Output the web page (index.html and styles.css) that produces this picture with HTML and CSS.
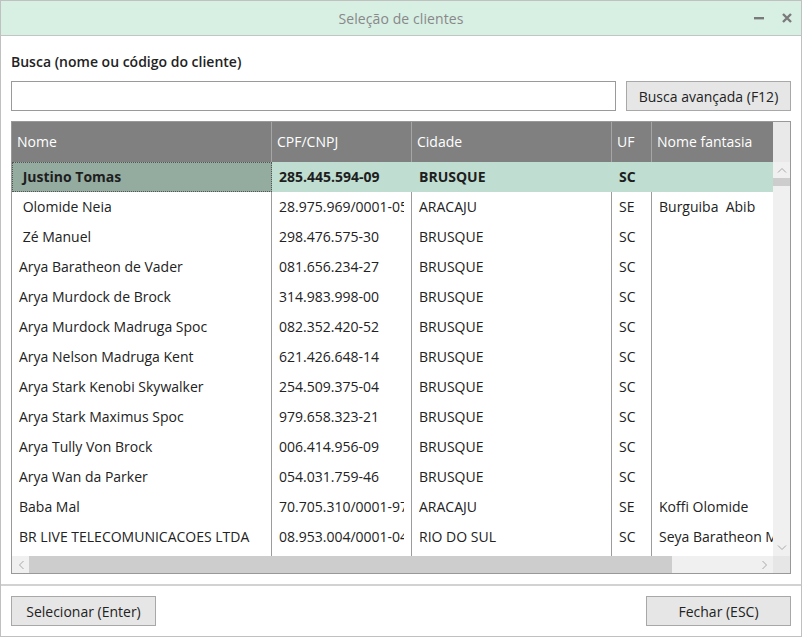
FILE: index.html
```html
<!DOCTYPE html>
<html lang="pt">
<head>
<meta charset="utf-8">
<title>Seleção de clientes</title>
<link rel="stylesheet" href="styles.css">
</head>
<body>
<div class="window">
  <div class="titlebar">
    <div class="title">Seleção de clientes</div>
    <div class="title-actions">
      <span class="tb-btn tb-min"><svg width="12" height="12" viewBox="0 0 12 12"><rect x="1" y="5" width="10" height="2.4" fill="#7a7a7a"/></svg></span>
      <span class="tb-btn tb-close"><svg width="12" height="12" viewBox="0 0 12 12"><path d="M2 2 L10 10 M10 2 L2 10" stroke="#7a7a7a" stroke-width="2.4" stroke-linecap="butt"/></svg></span>
    </div>
  </div>
  <div class="content">
    <label class="search-label" for="busca">Busca (nome ou código do cliente)</label>
    <div class="search-row">
      <input id="busca" class="search-input" type="text">
      <button class="btn btn-adv">Busca avançada (F12)</button>
    </div>
    <div class="grid">
      <div class="grid-main">
        <div class="grid-cols">
          <div class="row head">
            <div class="c c1"><span>Nome</span></div><div class="c c2"><span>CPF/CNPJ</span></div><div class="c c3"><span>Cidade</span></div><div class="c c4"><span>UF</span></div><div class="c c5"><span>Nome fantasia</span></div>
          </div>
          <div class="row sel">
            <div class="c c1 focus"><span>&nbsp;Justino Tomas</span></div><div class="c c2"><span>285.445.594-09</span></div><div class="c c3"><span>BRUSQUE</span></div><div class="c c4"><span>SC</span></div><div class="c c5"><span></span></div>
          </div>
          <div class="row"><div class="c c1"><span>&nbsp;Olomide Neia</span></div><div class="c c2"><span>28.975.969/0001-05</span></div><div class="c c3"><span>ARACAJU</span></div><div class="c c4"><span>SE</span></div><div class="c c5"><span>Burguiba&nbsp; Abib</span></div></div>
          <div class="row"><div class="c c1"><span>&nbsp;Zé Manuel</span></div><div class="c c2"><span>298.476.575-30</span></div><div class="c c3"><span>BRUSQUE</span></div><div class="c c4"><span>SC</span></div><div class="c c5"><span></span></div></div>
          <div class="row"><div class="c c1"><span>Arya Baratheon de Vader</span></div><div class="c c2"><span>081.656.234-27</span></div><div class="c c3"><span>BRUSQUE</span></div><div class="c c4"><span>SC</span></div><div class="c c5"><span></span></div></div>
          <div class="row"><div class="c c1"><span>Arya Murdock de Brock</span></div><div class="c c2"><span>314.983.998-00</span></div><div class="c c3"><span>BRUSQUE</span></div><div class="c c4"><span>SC</span></div><div class="c c5"><span></span></div></div>
          <div class="row"><div class="c c1"><span>Arya Murdock Madruga Spoc</span></div><div class="c c2"><span>082.352.420-52</span></div><div class="c c3"><span>BRUSQUE</span></div><div class="c c4"><span>SC</span></div><div class="c c5"><span></span></div></div>
          <div class="row"><div class="c c1"><span>Arya Nelson Madruga Kent</span></div><div class="c c2"><span>621.426.648-14</span></div><div class="c c3"><span>BRUSQUE</span></div><div class="c c4"><span>SC</span></div><div class="c c5"><span></span></div></div>
          <div class="row"><div class="c c1"><span>Arya Stark Kenobi Skywalker</span></div><div class="c c2"><span>254.509.375-04</span></div><div class="c c3"><span>BRUSQUE</span></div><div class="c c4"><span>SC</span></div><div class="c c5"><span></span></div></div>
          <div class="row"><div class="c c1"><span>Arya Stark Maximus Spoc</span></div><div class="c c2"><span>979.658.323-21</span></div><div class="c c3"><span>BRUSQUE</span></div><div class="c c4"><span>SC</span></div><div class="c c5"><span></span></div></div>
          <div class="row"><div class="c c1"><span>Arya Tully Von Brock</span></div><div class="c c2"><span>006.414.956-09</span></div><div class="c c3"><span>BRUSQUE</span></div><div class="c c4"><span>SC</span></div><div class="c c5"><span></span></div></div>
          <div class="row"><div class="c c1"><span>Arya Wan da Parker</span></div><div class="c c2"><span>054.031.759-46</span></div><div class="c c3"><span>BRUSQUE</span></div><div class="c c4"><span>SC</span></div><div class="c c5"><span></span></div></div>
          <div class="row"><div class="c c1"><span>Baba Mal</span></div><div class="c c2"><span>70.705.310/0001-97</span></div><div class="c c3"><span>ARACAJU</span></div><div class="c c4"><span>SE</span></div><div class="c c5"><span>Koffi Olomide</span></div></div>
          <div class="row"><div class="c c1"><span>BR LIVE TELECOMUNICACOES LTDA</span></div><div class="c c2"><span>08.953.004/0001-04</span></div><div class="c c3"><span>RIO DO SUL</span></div><div class="c c4"><span>SC</span></div><div class="c c5"><span>Seya Baratheon Mota</span></div></div>
          <div class="row"><div class="c c1"><span></span></div><div class="c c2"><span></span></div><div class="c c3"><span></span></div><div class="c c4"><span></span></div><div class="c c5"><span></span></div></div>
        </div>
        <div class="vscroll">
          <div class="vs-head"></div>
          <div class="vs-track">
            <div class="arrow up"><svg width="10" height="6" viewBox="0 0 10 6"><path d="M1 5.5 L5 1.5 L9 5.5" fill="none" stroke="#a8a8a8" stroke-width="1"/></svg></div>
            <div class="vs-thumb"></div>
            <div class="vs-fill"></div>
            <div class="arrow down"><svg width="10" height="6" viewBox="0 0 10 6"><path d="M1 0.5 L5 4.5 L9 0.5" fill="none" stroke="#a8a8a8" stroke-width="1"/></svg></div>
          </div>
        </div>
      </div>
      <div class="hscroll-row">
        <div class="hscroll">
          <div class="arrow left"><svg width="6" height="10" viewBox="0 0 6 10"><path d="M5.5 1 L1.5 5 L5.5 9" fill="none" stroke="#a8a8a8" stroke-width="1"/></svg></div>
          <div class="hs-thumb"></div>
          <div class="hs-fill"></div>
          <div class="arrow right"><svg width="6" height="10" viewBox="0 0 6 10"><path d="M0.5 1 L4.5 5 L0.5 9" fill="none" stroke="#a8a8a8" stroke-width="1"/></svg></div>
        </div>
        <div class="corner"></div>
      </div>
    </div>
  </div>
  <div class="footer">
    <button class="btn btn-foot">Selecionar (Enter)</button>
    <button class="btn btn-foot">Fechar (ESC)</button>
  </div>
</div>
</body>
</html>
```

FILE: styles.css
```css
* { box-sizing: border-box; }
html, body { margin: 0; padding: 0; background: #ffffff; }
body {
  font-family: "Open Sans", "Noto Sans", sans-serif;
  font-size: 14px;
  color: #222222;
}
.window {
  width: 802px;
  height: 637px;
  border: 1px solid #c0c0c0;
  display: flex;
  flex-direction: column;
  background: #ffffff;
}
.titlebar {
  height: 35px;
  flex: none;
  background: #d8efe4;
  border-bottom: 1px solid #c4c4c4;
  display: flex;
  align-items: center;
  justify-content: center;
  position: relative;
}
.title {
  color: #888888;
  font-size: 14px;
  letter-spacing: 0.1px;
}
.title-actions {
  position: absolute;
  right: 8px;
  top: 0;
  height: 34px;
  display: flex;
  align-items: center;
  gap: 16px;
}
.tb-btn { display: flex; width: 12px; height: 12px; }
.content {
  flex: none;
  padding: 16px 10px 0 10px;
  display: flex;
  flex-direction: column;
}
.search-label {
  display: block;
  line-height: 20px;
  font-weight: 600;
  color: #222;
  height: 20px;
}
.search-row {
  display: flex;
  gap: 10px;
  margin-top: 9px;
}
.search-input {
  width: 605px;
  height: 30px;
  border: 1px solid #9a9a9a;
  background: #fff;
  margin: 0;
  padding: 0 6px;
  font: inherit;
}
.btn {
  font-family: "Open Sans", "Noto Sans", sans-serif;
  font-size: 14px;
  color: #222;
  background: #e6e6e6;
  border: 1px solid #a8a8a8;
  height: 30px;
  margin: 0;
  padding: 0;
}
.btn-adv { width: 165px; }
.grid {
  margin-top: 10px;
  width: 780px;
  height: 453px;
  border: 1px solid #999999;
  display: flex;
  flex-direction: column;
}
.grid-main {
  flex: 1;
  display: flex;
  min-height: 0;
}
.grid-cols {
  width: 761px;
  overflow: hidden;
}
.row {
  display: flex;
  height: 30px;
  white-space: nowrap;
}
.row.head {
  height: 40px;
  background: #808080;
  color: #ffffff;
}
.c {
  flex: none;
  padding: 0 7px;
  line-height: 30px;
  border-right: 1px solid #9c9c9c;
}
.c span {
  display: block;
  overflow: hidden;
  height: 100%;
}
.head .c {
  padding-left: 5px;
  line-height: 40px;
  border-right: 1px solid #a6a6a6;
}
.c1 { width: 260px; }
.c2 { width: 140px; }
.c3 { width: 200px; }
.c4 { width: 40px; }
.c5 { width: 200px; border-right: none; }
.sel {
  background: #bfddd0;
  font-weight: 700;
  color: #1e1e1e;
}
.sel .c { border-right-color: #bfddd0; }
.sel .c1.focus {
  background: #94ab9f;
  border: 1px dotted #555;
  padding-left: 6px;
  line-height: 28px;
}
.vscroll {
  width: 17px;
  flex: none;
  display: flex;
  flex-direction: column;
  background: #ebebeb;
}
.vs-head { height: 40px; background: #e9e9e9; }
.vs-track {
  flex: 1;
  display: flex;
  flex-direction: column;
  background: #f0f0f0;
}
.arrow {
  display: flex;
  align-items: center;
  justify-content: center;
  flex: none;
}
.arrow.up, .arrow.down { height: 16px; }
.vs-thumb { height: 8px; background: #cdcdcd; }
.vs-fill { flex: 1; }
.hscroll-row {
  height: 17px;
  flex: none;
  display: flex;
}
.hscroll {
  flex: 1;
  display: flex;
  background: #f0f0f0;
}
.arrow.left, .arrow.right { width: 17px; }
.hs-thumb { width: 643px; background: #cdcdcd; }
.hs-fill { flex: 1; }
.corner { width: 17px; background: #e6e6e6; }
.footer {
  margin-top: 10px;
  border-top: 2px solid #d2d2d2;
  flex: 1;
  display: flex;
  justify-content: space-between;
  align-items: flex-start;
  padding: 10px 10px 0 10px;
}
.btn-foot { width: 145px; }
```
